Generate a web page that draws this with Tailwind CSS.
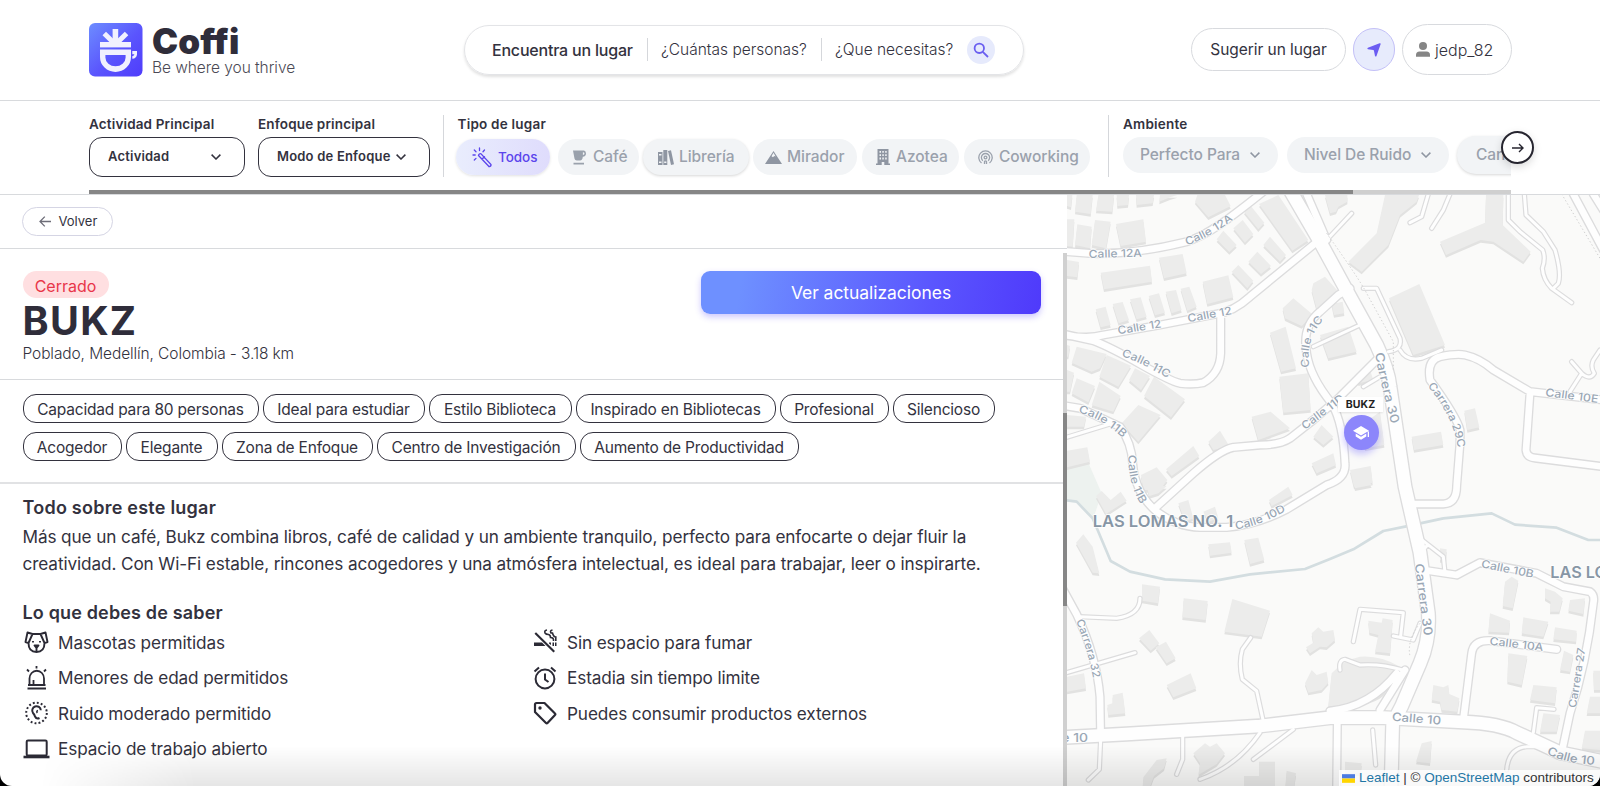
<!DOCTYPE html>
<html lang="es">
<head>
<meta charset="utf-8">
<title>Coffi</title>
<script src="https://cdn.jsdelivr.net/npm/@tailwindcss/browser@4"></script>
</head>
<body class="bg-black">
<div class="relative flex h-[786px] w-[1600px] flex-col overflow-hidden rounded-b-[12px] bg-white font-['Inter','Noto_Sans',sans-serif] text-[#33323e]">

  <!-- Header -->
  <header class="flex h-[101px] shrink-0 items-center border-b border-[#d8dadd] pl-[89px] pr-[88px]">
    <div class="flex w-[375px] items-center gap-[10px]">
      <svg class="-mt-px h-[54px] w-[54px] shrink-0" viewBox="0 0 54 54">
        <defs><linearGradient id="lg" x1="0" y1="0" x2="1" y2="1"><stop offset="0" stop-color="#6d8dff"/><stop offset=".55" stop-color="#5a54fd"/><stop offset="1" stop-color="#4f3cfb"/></linearGradient></defs>
        <rect width="53.5" height="53.5" rx="6" fill="url(#lg)"/>
        <g fill="#f1f1fe">
          <rect x="11" y="19" width="31" height="5.4"/>
          <rect x="23.6" y="6" width="5.6" height="14"/>
          <path d="M13.5 12.2L17 8.8L25.5 17V20H21.4ZM39.3 12.2L35.8 8.8L27.3 17V20H31.4Z"/>
          <path fill-rule="evenodd" d="M11 26.5H42V34A15.5 15 0 0 1 11 34ZM16.4 32V34.5A10.1 8.8 0 0 0 36.6 34.5V32Z"/>
          <path d="M43.3 28H48V31.5Q47.5 35.5 43.3 35.8V33.2Q45.2 33 45.4 31.3H43.3Z"/>
        </g>
      </svg>
      <div class="-ml-px flex flex-col">
        <span class="text-[35px] font-black leading-[34px] text-[#2f2d3a]"><span class="tracking-[0.1px]">Coffi</span></span>
        <span class="text-[15.5px] font-light leading-[19px] tracking-[-0.06px] text-[#4b4a55]">Be where you thrive</span>
      </div>
    </div>
    <div class="-mt-px flex h-[50px] w-[560px] items-center rounded-full border border-[#e3e4e7] pl-[27px] shadow-[0_2px_3px_rgba(0,0,0,0.12)]">
      <span class="w-[155px] pt-px text-base font-medium tracking-[-0.2px]">Encuentra un lugar</span>
      <span class="h-[23px] w-px bg-[#d5d7db]"></span>
      <span class="w-[173px] pl-[13px] pt-px text-[15.5px] font-light">¿Cuántas personas?</span>
      <span class="h-[23px] w-px bg-[#d5d7db]"></span>
      <span class="w-[145px] pl-[13px] pt-px text-[15.5px] font-light">¿Que necesitas?</span>
      <span class="flex h-[28px] w-[28px] items-center justify-center rounded-full bg-[#e6eafc]">
        <svg class="h-[16px] w-[16px]" viewBox="0 0 16 16" fill="none" stroke="#6a5ff0" stroke-width="1.8"><circle cx="6.3" cy="6.3" r="4.7"/><path d="M9.8 9.8L15 15"/></svg>
      </span>
    </div>
    <div class="-mt-px ml-auto flex items-center gap-[7px]">
      <div class="flex h-[43px] w-[155px] items-center justify-center rounded-full border border-[#d8dade] pt-px text-[15.5px] tracking-[-0.05px]">Sugerir un lugar</div>
      <div class="flex h-[43px] w-[42px] items-center justify-center rounded-full border border-[#c3c0f7] bg-[#e7ebfc]">
        <svg class="h-[14px] w-[14px]" viewBox="0 0 14 14" fill="#6b5cf2"><path d="M12.600 .3Q13.900 -.1 13.600 1.300L9.500 12.900Q8.900 14.100 8 13L6.900 7.500Q6.700 7.100 6.300 7L.9 6.200Q-.3 5.500 .9 4.700Z"/></svg>
      </div>
      <div class="flex h-[51px] w-[110px] items-center rounded-full border border-[#d8dade] pl-[13px]">
        <svg class="h-[15px] w-[14px]" viewBox="0 0 14 15" fill="#858585"><circle cx="7" cy="4" r="4"/><path d="M0 14.700V13Q0 9.500 3.500 9.500H10.500Q14 9.500 14 13V14.700Z"/></svg>
        <span class="pl-[5px] text-base font-light">jedp_82</span>
      </div>
    </div>
  </header>

  <!-- Filter bar -->
  <section class="relative flex h-[94px] shrink-0 flex-col border-b border-[#d8dadd] pl-[89px] pr-[89px]">
    <div class="flex h-[89px] overflow-hidden pt-[14px]">
      <div class="w-[169px] shrink-0">
        <div class="h-[22px] text-[13.5px] font-semibold leading-[18px] tracking-[0.15px]">Actividad Principal</div>
        <div class="flex h-[40px] w-[156px] items-center justify-between rounded-[13px] border border-[#33323e] pl-[18px] pr-[23px] text-[13px] font-semibold tracking-[0.2px]"><span>Actividad</span>
          <svg class="h-[6px] w-[10px]" viewBox="0 0 10 6" fill="none" stroke="#33323e" stroke-width="1.500"><path d="M.6 .6L5 5L9.400 .6"/></svg></div>
      </div>
      <div class="w-[185px] shrink-0">
        <div class="h-[22px] text-[13.5px] font-semibold leading-[18px] tracking-[0.15px]">Enfoque principal</div>
        <div class="flex h-[40px] w-[172px] items-center justify-between rounded-[13px] border border-[#33323e] pl-[18px] pr-[23px] text-[13px] font-semibold tracking-[0.2px]"><span>Modo de Enfoque</span>
          <svg class="h-[6px] w-[10px]" viewBox="0 0 10 6" fill="none" stroke="#33323e" stroke-width="1.500"><path d="M.6 .6L5 5L9.400 .6"/></svg></div>
      </div>
      <div class="h-[62px] w-[13px] shrink-0 border-l border-[#d5d7db]"></div>
      <div class="w-[652px] shrink-0">
        <div class="h-[24px] pl-[1.5px] text-[13.5px] font-semibold leading-[18px] tracking-[0.22px]">Tipo de lugar</div>
        <div class="flex text-[15.5px] font-medium tracking-[-0.05px] text-[#9aa1ac]">
          <div class="mr-[8px] flex h-[36px] w-[94px] items-center rounded-full bg-gradient-to-r from-[#e9edfd] to-[#dfdcfc] pl-[16px] text-[13.5px] text-[#5b45ec] shadow-[0_1px_3px_rgba(0,0,0,0.12)]">
            <svg class="mr-[6px] h-[21px] w-[20px]" viewBox="0 0 20 21" fill="none" stroke="#5b45ec" stroke-width="1.300" stroke-linecap="round"><path d="M6.500 8.500Q7 6.300 9 6.800L19 17.500Q19.200 19.500 17.200 19.700ZM10 12L12.500 9.800M7.500 1V3.500M1 8H3.200M2.300 3L4 4.700M12.500 3L11 4.700M2.300 13L4 11.400"/></svg>
            <span>Todos</span></div>
          <div class="mr-[4px] flex h-[36px] w-[81px] items-center rounded-full bg-[#f2f4f6] pl-[15px]">
            <svg class="mr-[7px] h-[15px] w-[13px]" viewBox="0 0 13 15" fill="#9aa1ac"><path fill-rule="evenodd" d="M0 .5H11Q13 .8 13 3.500Q13 6.500 9.800 6.700Q9.500 10.500 7 10.500H4Q1.500 10.500 1.200 7ZM9.900 2.300V5Q11.500 5 11.500 3.600Q11.500 2.300 9.900 2.300ZM.5 12.800H11V14.500H.5Z"/></svg>
            <span>Café</span></div>
          <div class="mr-[4px] flex h-[36px] w-[106px] items-center rounded-full bg-[#f2f4f6] pl-[15px] shadow-[0_1px_3px_rgba(0,0,0,0.16)]">
            <svg class="mr-[5px] h-[15px] w-[16px]" viewBox="0 0 16 15" fill="#8f96a2"><path fill-rule="evenodd" d="M0 2H4.500V15H0ZM1 4V5.500H3.500V4ZM1 11.500V13H3.500V11.500ZM5.300 0H9.300V15H5.300ZM6.200 11.500V13H8.400V11.500ZM10 1L13 .3L16 14.300L13 15Z"/></svg>
            <span>Librería</span></div>
          <div class="mr-[5px] flex h-[36px] w-[104px] items-center rounded-full bg-[#f2f4f6] pl-[12px]">
            <svg class="mr-[5px] h-[13px] w-[17px]" viewBox="0 0 17 13" fill="#8f96a2"><path fill-rule="evenodd" d="M8.500 0L17 13H0ZM8.500 1.800L6.500 5.200L8 6.200L9.200 5L10.600 5.500Z"/></svg>
            <span>Mirador</span></div>
          <div class="mr-[5px] flex h-[36px] w-[97px] items-center rounded-full bg-[#f2f4f6] pl-[14px]">
            <svg class="mr-[6px] h-[16px] w-[14px]" viewBox="0 0 14 16" fill="#8f96a2"><path fill-rule="evenodd" d="M1.500 0H12.500V14.600H14V16H8.300V13H5.700V16H0V14.600H1.500ZM3.500 2V3.800H5V2ZM6.300 2V3.800H7.800V2ZM9.200 2V3.800H10.700V2ZM3.500 5.300V7.100H5V5.300ZM6.300 5.300V7.100H7.800V5.300ZM9.200 5.300V7.100H10.700V5.300ZM3.500 8.600V10.400H5V8.600ZM6.300 8.600V10.400H7.800V8.600ZM9.200 8.600V10.400H10.700V8.600Z"/></svg>
            <span>Azotea</span></div>
          <div class="flex h-[36px] w-[126px] items-center rounded-full bg-[#f2f4f6] pl-[14px]">
            <svg class="mr-[6px] h-[15px] w-[15px]" viewBox="0 0 15 15" fill="none" stroke="#9aa1ac" stroke-width="1.300"><path d="M3.500 13A6.700 6.700 0 1 1 11.500 13M4.800 10.700A4.100 4.100 0 1 1 10.200 10.700"/><circle cx="7.500" cy="7.500" r="1.400"/><path d="M6.500 14V11.500Q7.500 10.300 8.500 11.500V14"/></svg>
            <span>Coworking</span></div>
        </div>
      </div>
      <div class="h-[62px] w-[15px] shrink-0 border-l border-[#d5d7db]"></div>
      <div class="w-[500px] shrink-0">
        <div class="h-[22px] text-[13.5px] font-semibold leading-[18px] tracking-[0.2px]">Ambiente</div>
        <div class="flex text-[15.5px] font-medium tracking-[-0.05px] text-[#9aa1ac]">
          <div class="mr-[9px] flex h-[36px] w-[155px] items-center rounded-full bg-[#f2f4f6] pl-[17px]"><span>Perfecto Para</span>
            <svg class="ml-[10px] h-[6px] w-[10px]" viewBox="0 0 10 6" fill="none" stroke="#8f96a2" stroke-width="1.500"><path d="M.6 .6L5 5L9.400 .6"/></svg></div>
          <div class="mr-[8px] flex h-[36px] w-[162px] items-center rounded-full bg-[#f2f4f6] pl-[17px]"><span>Nivel De Ruido</span>
            <svg class="ml-[10px] h-[6px] w-[10px]" viewBox="0 0 10 6" fill="none" stroke="#8f96a2" stroke-width="1.500"><path d="M.6 .6L5 5L9.400 .6"/></svg></div>
          <div class="-mt-px flex h-[38px] w-[155px] items-center rounded-full bg-[#f2f4f6] pl-[19px] shadow-[0_1px_3px_rgba(0,0,0,0.16)]"><span>Cantidad</span></div>
        </div>
      </div>
    </div>
    <div class="flex h-[4px] bg-[#cfcfcf]"><div class="w-[1264px] bg-[#868686]"></div></div>
    <div class="absolute left-[1501px] top-[30px] flex h-[33px] w-[33px] items-center justify-center rounded-full border-2 border-[#26252f] bg-white shadow-[0_3px_8px_rgba(0,0,0,0.15)]">
      <svg class="h-[10px] w-[12px]" viewBox="0 0 12 10" fill="none" stroke="#26252f" stroke-width="1.400"><path d="M0 5H11M7 1L11 5L7 9"/></svg>
    </div>
  </section>

  <main class="flex min-h-0 flex-1">
    <!-- Place detail -->
    <div class="flex w-[1067px] shrink-0 flex-col">
      <div class="flex h-[54px] shrink-0 items-center border-b border-[#d8dadd] pl-[21.5px]">
        <div class="flex h-[29px] w-[91px] items-center rounded-full border border-[#d5d5e4] pl-[16px] text-[13px]">
          <svg class="mr-[8px] h-[11px] w-[12px]" viewBox="0 0 12 11" fill="none" stroke="#6d6d78" stroke-width="1.300"><path d="M12 5.500H1M5.800 .6L1 5.500L5.800 10.400"/></svg>
          <span>Volver</span></div>
      </div>
      <div class="flex min-h-0 flex-1">
        <div class="flex w-[1063px] flex-col">
          <div class="flex h-[131px] shrink-0 border-b border-[#d8dadd] pl-[22.5px] pr-[22px] pt-[22px]">
            <div class="flex flex-1 flex-col items-start">
              <span class="flex h-[27px] w-[86px] items-center justify-center rounded-full bg-[#ffdfe1] pt-[2px] text-base text-[#e8364a]">Cerrado</span>
              <h1 class="mt-px text-[39.5px] font-bold leading-[44px] tracking-[1.3px] text-[#2f2d3a]">BUKZ</h1>
              <p class="text-[15.5px] font-light leading-[22px] tracking-[-0.1px]">Poblado, Medellín, Colombia - 3.18 km</p>
            </div>
            <div class="flex h-[43px] w-[340px] items-center justify-center rounded-[9px] bg-linear-[100deg,#6e90ff_12%,#5a55fe_68%,#4f3afb] pt-[2px] text-[17.5px] tracking-[-0.05px] text-white shadow-[0_3px_6px_rgba(90,70,250,0.3)]">Ver actualizaciones</div>
          </div>
          <div class="flex h-[104px] shrink-0 flex-col gap-[9px] border-b-2 border-[#e1e2e4] pl-[22.5px] pt-[14px] text-[15.5px] tracking-[-0.2px]">
            <div class="flex gap-[4px]">
              <span class="flex h-[29px] w-[236px] items-center justify-center rounded-[13px] border border-[#33323e] pt-[2px]">Capacidad para 80 personas</span>
              <span class="flex h-[29px] w-[162px] items-center justify-center rounded-[13px] border border-[#33323e] pt-[2px]">Ideal para estudiar</span>
              <span class="flex h-[29px] w-[143px] items-center justify-center rounded-[13px] border border-[#33323e] pt-[2px]">Estilo Biblioteca</span>
              <span class="flex h-[29px] w-[200px] items-center justify-center rounded-[13px] border border-[#33323e] pt-[2px]">Inspirado en Bibliotecas</span>
              <span class="flex h-[29px] w-[109px] items-center justify-center rounded-[13px] border border-[#33323e] pt-[2px]">Profesional</span>
              <span class="flex h-[29px] w-[102px] items-center justify-center rounded-[13px] border border-[#33323e] pt-[2px]">Silencioso</span>
            </div>
            <div class="flex gap-[4px]">
              <span class="flex h-[29px] w-[99px] items-center justify-center rounded-[13px] border border-[#33323e] pt-[2px]">Acogedor</span>
              <span class="flex h-[29px] w-[92px] items-center justify-center rounded-[13px] border border-[#33323e] pt-[2px]">Elegante</span>
              <span class="flex h-[29px] w-[151px] items-center justify-center rounded-[13px] border border-[#33323e] pt-[2px]">Zona de Enfoque</span>
              <span class="flex h-[29px] w-[199px] items-center justify-center rounded-[13px] border border-[#33323e] pt-[2px]">Centro de Investigación</span>
              <span class="flex h-[29px] w-[219px] items-center justify-center rounded-[13px] border border-[#33323e] pt-[2px]">Aumento de Productividad</span>
            </div>
          </div>
          <div class="pl-[22.5px] pt-[12px] text-[17.2px] tracking-[-0.115px]">
            <h2 class="text-[18px] font-semibold leading-[24px] tracking-[0.24px]">Todo sobre este lugar</h2>
            <p class="mt-[2.5px] whitespace-nowrap leading-[27px]">Más que un café, Bukz combina libros, café de calidad y un ambiente tranquilo, perfecto para enfocarte o dejar fluir la<br>creatividad. Con Wi-Fi estable, rincones acogedores y una atmósfera intelectual, es ideal para trabajar, leer o inspirarte.</p>
            <h2 class="mt-[24.5px] text-[18px] font-semibold leading-[24px] tracking-[0.16px]">Lo que debes de saber</h2>
            <div class="-mt-[0.5px] grid grid-cols-[509.5px_1fr] leading-[35.5px]">
              <div class="flex items-center gap-[8.5px]"><svg class="h-[26px] w-[27px]" viewBox="0 0 26 26" fill="none" stroke="#2b2a35" stroke-width="1.900" stroke-linejoin="round"><path d="M9 5H17L22 3.500L24 13L21 14Q21 23 13 23Q5 23 5 14L2 13L4 3.500ZM9 5L5 14M17 5L21 14"/><path d="M11 16.500H15L13 19ZM13 19V22" fill="#2b2a35"/><path d="M9.500 12V13.500M16.500 12V13.500"/></svg><span>Mascotas permitidas</span></div>
              <div class="flex items-center gap-[9px]"><svg class="h-[26px] w-[26px]" viewBox="0 0 26 26" fill="#2b2a35"><path d="M2.500 4.800L4 3.300L23 22L21.500 23.500ZM2 13.500H10L13.500 17H2ZM17 13.500H19V16L17 14.500ZM20.500 13.500H22V17H20.500ZM23 13.500H24.500V17H23Z"/><path d="M15 1Q12 1.500 13 4Q14 5.500 16.500 5.500Q18.500 6 18.500 8.500Q22 8.500 21.500 12M20.500 1Q17.500 1.500 19 4H20.500Q21.500 8 23.800 8V12" fill="none" stroke="#2b2a35" stroke-width="1.600"/></svg><span>Sin espacio para fumar</span></div>
              <div class="flex items-center gap-[8.5px]"><svg class="h-[26px] w-[27px]" viewBox="0 0 26 26" fill="none" stroke="#2b2a35" stroke-width="1.800"><path d="M4 23.500H22.500M6 20V13.500A7 7.500 0 0 1 20.500 13.500V20M4.500 20H22M10 20V15M13 1V3.500M3.500 4.500L5.500 6.500M22.500 4.500L20.500 6.500"/></svg><span>Menores de edad permitidos</span></div>
              <div class="flex items-center gap-[9px]"><svg class="h-[26px] w-[26px]" viewBox="0 0 26 26" fill="none" stroke="#2b2a35" stroke-width="2"><circle cx="13" cy="14" r="9.400"/><path d="M13 8.500V14.500L16.500 17M2.500 6.500L7 2.500M23.500 6.500L19 2.500"/></svg><span>Estadia sin tiempo limite</span></div>
              <div class="flex items-center gap-[8.5px]"><svg class="h-[26px] w-[27px]" viewBox="0 0 26 26" fill="none" stroke="#2b2a35" stroke-width="2"><circle cx="13" cy="13" r="10.300" stroke-dasharray="1.900 2.145"/><path d="M17.300 10.300A4.300 4.300 0 1 0 9.500 13Q11 14.500 11.500 16.500Q13 19.500 16 18" /><path d="M14.500 10.500Q12.500 11 13.800 13" stroke-width="1.500"/></svg><span>Ruido moderado permitido</span></div>
              <div class="flex items-center gap-[9px]"><svg class="h-[26px] w-[26px]" viewBox="0 0 26 26" fill="none" stroke="#2b2a35" stroke-width="2.200" stroke-linejoin="round"><path d="M3 4.500Q3 3 4.500 3H12.500L23 13.500Q23.800 14.200 23 15L15.500 23Q14.800 23.800 14 23L3 12Z"/><circle cx="8" cy="8" r="1.700" fill="#2b2a35" stroke="none"/></svg><span>Puedes consumir productos externos</span></div>
              <div class="flex items-center gap-[8.5px]"><svg class="h-[26px] w-[27px]" viewBox="0 0 26 26" fill="none" stroke="#2b2a35" stroke-width="2"><rect x="3.200" y="4.500" width="20" height="15" rx="1.300"/><path d="M0 21H26" stroke-width="2.600"/></svg><span>Espacio de trabajo abierto</span></div>
            </div>
          </div>
        </div>
        <div class="mt-[4px] flex w-[4px] flex-col bg-[#d0d0d0]"><div class="mt-[160px] h-[193px] bg-[#868686]"></div></div>
      </div>
    </div>

    <!-- Map: one unit is a third of a pixel -->
    <div class="relative w-[533px] overflow-hidden bg-[#fafaf9]">
      <svg class="block h-[591px] w-[533px]" viewBox="21 15 1599 1773">
        <path fill="#edf2ef" d="M21 830L85 818L125 910L100 985L50 935L21 930Z"/>
        <path fill="none" stroke="#d3dde0" stroke-width="8" stroke-linejoin="round" d="M0 928L50 935L98 985L152 1113L210 1145L315 1168L450 1175L570 1153L735 1137L810 1107L880 1078L970 1023L1035 1010L1150 985L1295 970L1365 1004L1490 1013L1585 1050H1620"/>
        <defs>
          <g id="b">
            <path d="M21 15H37L33 52L21 48ZM50 15H98L92 72L45 65ZM115 15H162L157 65L108 62ZM170 15H207L204 45L172 48ZM228 15H282L278 40L230 45ZM300 15H352L330 22L298 35ZM21 88H43L38 170L21 168ZM52 103L95 110L90 175L45 165ZM105 90L152 95L138 175L95 165ZM168 102L250 88L258 155L182 168ZM412 15H495L512 48L445 82L405 35ZM470 148L490 122L530 165L508 186ZM520 115L548 90L580 132L555 158ZM552 65L570 45L613 98L595 118ZM597 42L655 15L745 150L697 182ZM610 165L630 140L678 195L660 215ZM565 215L592 185L633 228L603 252ZM515 245L535 225L580 272L562 295ZM428 275L505 256L520 322L442 342ZM297 203L368 192L380 250L312 265ZM122 248L270 227L276 275L132 298ZM21 210L57 216L52 262L21 258ZM107 358L137 350L152 405L122 412ZM158 342L188 336L207 390L176 400ZM210 328L242 322L260 380L230 388ZM266 318L297 310L315 368L285 376ZM317 305L348 300L365 360L335 370ZM362 296L388 290L410 350L382 362Z"/>
            <path d="M50 470L140 492L120 535L95 545L35 518ZM140 495L213 527L175 590L118 560ZM225 535L270 558L243 600L207 570ZM21 465L30 468L25 500H21ZM50 565L105 588L85 637L35 610ZM118 575L182 618L160 665L95 645ZM21 540L42 548L30 605H21ZM282 560L375 628L333 682L252 618ZM235 645L302 675L235 755L185 700ZM21 675L78 680L72 710H21ZM21 782L82 772L90 815L21 832ZM630 428L677 410L708 535L663 545ZM658 560L745 550L752 660L670 668ZM668 355L700 325L760 375L725 408L675 385ZM755 300L760 280L795 260L840 310L770 358ZM575 680L632 665L690 715L595 750ZM445 755L480 722L508 768L460 780ZM318 838L400 768L418 798L335 858ZM243 855L290 832L322 870L300 900H250ZM760 740L785 705L820 740L790 765ZM755 820L820 790L828 825L770 850Z"/>
            <path d="M795 15H862V35L835 50L828 65L810 70ZM975 15H1077L1070 35L1020 75L985 165L905 245L865 215L950 130ZM1278 15H1330L1328 105L1412 185L1390 215L1300 155L1262 150L1158 195L1140 155L1275 98ZM987 325L1078 282L1155 465L1060 495ZM780 435L865 410L890 485L805 505ZM815 342L848 335L853 370L822 375ZM1213 662L1245 655L1258 712L1222 720ZM1055 740L1143 725L1150 765L1062 780ZM890 550L930 540L940 570L895 580ZM912 700L960 665L973 765L915 775ZM870 840L932 828L938 878L882 890Z"/>
            <path d="M108 918L125 903L152 930L182 905L200 932L138 972ZM260 888H320L295 910L268 918ZM355 940L385 930L400 985L375 995ZM430 965L465 950L475 985L445 995ZM627 930L685 890L698 915L635 948ZM48 1058L70 1033L98 1070L118 1150L98 1148ZM445 1063L510 1057L515 1088L450 1097ZM553 1050L595 1043L613 1110L570 1122ZM246 1183L300 1190L294 1240L246 1232ZM371 1225L443 1233L437 1290L367 1282ZM517 1227L630 1262L605 1340L493 1325ZM237 1345L268 1320L298 1360L272 1382ZM287 1372L318 1355L347 1405L320 1420ZM320 1485L392 1450L409 1495L340 1522ZM21 1460L72 1450L78 1495L21 1505ZM142 1545L158 1540V1515L188 1508L196 1570L145 1575ZM738 1372L760 1358L755 1330L775 1312L790 1325L820 1320L825 1350L800 1372L780 1370L750 1390ZM735 1480L755 1440L770 1455L800 1445L805 1478L785 1500L745 1508ZM400 1690L435 1660L450 1670L470 1660L495 1690L470 1722L415 1755L420 1720ZM250 1762L290 1710L320 1705L312 1735L282 1758L270 1790H248ZM552 1758H597V1715H645V1790H552ZM680 1742L708 1750L702 1790H676Z"/>
            <path d="M880 870H925L935 885L885 895ZM1335 1175L1355 1160L1375 1172L1358 1255L1328 1248ZM1455 1195L1485 1205L1508 1225L1498 1265H1470L1472 1235L1455 1225ZM1530 1230L1575 1225L1570 1272L1525 1262ZM1290 1270L1350 1292L1347 1328L1285 1325ZM1390 1282L1465 1295L1450 1340L1385 1330ZM1485 1312L1550 1322L1548 1355L1480 1348ZM1345 1390L1402 1398L1385 1485L1342 1475ZM1512 1382L1540 1395L1530 1445L1500 1440ZM1420 1485L1490 1492L1485 1540L1410 1530ZM1450 1570L1500 1575L1490 1625L1440 1625ZM1600 1442H1620V1500H1602ZM1590 1520H1620V1570H1580ZM1575 1622H1620V1680L1565 1675ZM925 1292L965 1298L968 1285L998 1290L990 1390L945 1385L955 1335L928 1328ZM805 1545L815 1450Q850 1410 900 1400Q960 1395 1020 1430L970 1510Q930 1545 805 1550ZM1120 1485L1150 1492L1165 1485L1168 1512L1198 1525L1192 1565L1145 1560L1140 1535L1115 1530ZM1085 1660L1115 1653L1110 1720L1068 1715ZM855 1715L905 1720L902 1750H855ZM1140 1075L1160 1078L1158 1110H1140Z"/>
          </g>
          <g id="r10" fill="none" stroke-linejoin="round" stroke-linecap="round">
            <path d="M910 295L950 295L1020 445Q1028 480 985 485M1020 480Q1040 515 1085 505L1145 480M1105 12L1085 80L1050 98M1170 12L1150 60L1115 115M1345 12V90L1380 125L1448 180Q1458 205 1447 235Q1450 270 1475 295L1535 338M1393 12L1398 75L1450 125L1485 180Q1505 250 1495 280L1480 295M1535 515L1565 550L1530 605M1565 550Q1590 572 1603 550Q1590 530 1600 510L1620 480M875 70L800 150M760 470L900 405M0 748L150 702M20 1448L225 1388M60 1280L170 1285Q240 1275 240 1225M612 1603L590 1503L547 1468Q535 1420 547 1378L572 1343M368 1638V1708L350 1753M600 1628Q530 1730 420 1768M700 1618L580 1708M122 1648L118 1738L85 1770M840 1440Q835 1410 855 1408L900 1425Q960 1420 1028 1440M880 1355L900 1258L1030 1268L1022 1338M1000 1338L1060 1350L1080 1300M1080 1045L1150 1100L1155 1148M1085 1085L1100 1068M1420 1628L1430 1553L1482 1558M1340 1740Q1345 1675 1400 1670H1440M938 1620L947 1725M910 590L960 560L985 570"/>
          </g>
          <g id="r20" fill="none" stroke-linejoin="round" stroke-linecap="round">
            <path d="M0 183L100 191C200 192 300 175 380 155C450 135 540 60 610 5M0 432Q80 450 130 435L300 405L470 372Q520 365 570 320L780 148M0 430L100 452C200 490 300 565 360 580Q400 585 430 578Q480 550 482 490V370M870 295L835 315L780 365Q725 410 740 490Q750 560 815 640M290 950L400 850Q480 780 520 772L600 765Q660 765 690 745L760 690L830 630L960 500M0 645L60 655L180 710Q215 760 218 820Q225 910 290 965Q350 1010 420 1012L500 1012Q590 1005 680 958L800 885Q860 865 855 820Q850 700 815 640M1190 888L1200 760V720Q1190 680 1110 570Q1100 510 1140 500Q1190 490 1215 495Q1260 505 1300 540L1410 605L1630 630M1190 888Q1190 940 1150 942H1065M1410 610L1398 780Q1400 802 1425 804L1630 830M10 1200L50 1273Q110 1400 120 1520L122 1640M1090 1140L1190 1155L1260 1118L1430 1150L1510 1190L1590 1205Q1605 1215 1600 1240Q1580 1420 1530 1570L1505 1688M1490 1378L1290 1352Q1240 1350 1235 1390L1210 1590M832 1600L830 1790M1035 1440L960 1560M810 1563Q930 1550 1010 1450M1540 12L1630 180M1600 12L1630 60M740 12L800 150"/>
          </g>
          <g id="r40" fill="none" stroke-linejoin="round">
            <path d="M690 0L780 155L870 320L950 465Q985 540 990 590L1035 890L1080 1088L1105 1270Q1110 1350 1080 1420L1025 1548L998 1600L993 1800M0 1643L200 1632L600 1608L810 1583H970L1210 1596Q1320 1600 1370 1628L1500 1688L1630 1715"/>
          </g>
        </defs>
        <use href="#b" fill="#e2e2e1" y="8"/><use href="#b" fill="#ececeb"/>
        <g stroke="#dcdcdd"><use href="#r10" stroke-width="16"/><use href="#r20" stroke-width="28"/><use href="#r40" stroke-width="46"/></g>
        <g stroke="#fefefe"><use href="#r10" stroke-width="9"/><use href="#r20" stroke-width="20"/><use href="#r40" stroke-width="38"/></g>
        <path fill="none" stroke="#cfcfcf" stroke-width="3" stroke-dasharray="4 7" d="M800 130Q900 270 920 310L1000 455V540M1505 12L1620 205M1080 1300Q1040 1350 1050 1400"/>
        <defs>
          <path id="t1" d="M86 204L250 200"/><path id="t2" d="M380 166Q450 145 560 60"/><path id="t3" d="M175 433L330 408"/><path id="t4" d="M385 397L540 368"/>
          <path id="t5" d="M184 498Q240 515 340 575"/><path id="t6" d="M55 668Q130 685 200 755"/><path id="t7" d="M205 795Q205 900 255 960"/>
          <path id="t8" d="M748 532Q735 440 800 380"/><path id="t9" d="M735 720L860 625"/><path id="t10" d="M945 490Q960 580 1010 760"/>
          <path id="t11" d="M1102 588Q1190 690 1196 800"/><path id="t12" d="M1455 618L1640 642"/><path id="t13" d="M527 1018Q600 1010 700 950"/>
          <path id="t14" d="M48 1292Q90 1400 102 1480"/><path id="t15" d="M1064 1122L1095 1360"/><path id="t16" d="M1262 1132L1440 1168"/>
          <path id="t17" d="M1288 1364L1470 1386"/><path id="t18" d="M1548 1555L1580 1350"/><path id="t19" d="M995 1592L1170 1606"/><path id="t20" d="M1460 1692Q1530 1725 1630 1725"/>
        </defs>
        <g fill="#9aa7b5" stroke="#fff" stroke-width="4" paint-order="stroke" font-family="Inter, sans-serif" font-size="33" font-weight="500">
          <text><textPath href="#t1" textLength="160" lengthAdjust="spacingAndGlyphs">Calle 12A</textPath></text>
          <text><textPath href="#t2" textLength="160" lengthAdjust="spacingAndGlyphs">Calle 12A</textPath></text>
          <text><textPath href="#t3" textLength="132" lengthAdjust="spacingAndGlyphs">Calle 12</textPath></text>
          <text><textPath href="#t4" textLength="134" lengthAdjust="spacingAndGlyphs">Calle 12</textPath></text>
          <text><textPath href="#t5" textLength="155" lengthAdjust="spacingAndGlyphs">Calle 11C</textPath></text>
          <text><textPath href="#t6" textLength="155" lengthAdjust="spacingAndGlyphs">Calle 11B</textPath></text>
          <text><textPath href="#t7" textLength="155" lengthAdjust="spacingAndGlyphs">Calle 11B</textPath></text>
          <text><textPath href="#t8" textLength="155" lengthAdjust="spacingAndGlyphs">Calle 11C</textPath></text>
          <text><textPath href="#t9" textLength="150" lengthAdjust="spacingAndGlyphs">Calle 11D</textPath></text>
          <text font-size="37"><textPath href="#t10" textLength="218" lengthAdjust="spacingAndGlyphs">Carrera 30</textPath></text>
          <text><textPath href="#t11" textLength="210" lengthAdjust="spacingAndGlyphs">Carrera 29C</textPath></text>
          <text><textPath href="#t12" textLength="160" lengthAdjust="spacingAndGlyphs">Calle 10E</textPath></text>
          <text><textPath href="#t13" textLength="162" lengthAdjust="spacingAndGlyphs">Calle 10D</textPath></text>
          <text><textPath href="#t14" textLength="180" lengthAdjust="spacingAndGlyphs">Carrera 32</textPath></text>
          <text font-size="37"><textPath href="#t15" textLength="218" lengthAdjust="spacingAndGlyphs">Carrera 30</textPath></text>
          <text><textPath href="#t16" textLength="160" lengthAdjust="spacingAndGlyphs">Calle 10B</textPath></text>
          <text><textPath href="#t17" textLength="162" lengthAdjust="spacingAndGlyphs">Calle 10A</textPath></text>
          <text><textPath href="#t18" textLength="182" lengthAdjust="spacingAndGlyphs">Carrera 27</textPath></text>
          <text font-size="35"><textPath href="#t19" textLength="148" lengthAdjust="spacingAndGlyphs">Calle 10</textPath></text>
          <text font-size="35"><textPath href="#t20" textLength="148" lengthAdjust="spacingAndGlyphs">Calle 10</textPath></text>
          <text font-size="35" x="4" y="1655" textLength="80" lengthAdjust="spacingAndGlyphs">e 10</text>
          <g font-size="47" font-weight="600" fill="#8796a5"><text x="98" y="1011" textLength="422" lengthAdjust="spacingAndGlyphs">LAS LOMAS NO. 1</text><text x="1471" y="1165" textLength="282" lengthAdjust="spacingAndGlyphs">LAS LOMAS</text></g>
        </g>
      </svg>
      <div class="absolute left-[271px] top-[202px] flex h-[15px] w-[45px] items-center justify-center bg-white text-[10.5px] font-bold tracking-[0.1px] text-[#222] shadow-[0_1px_2px_rgba(0,0,0,0.1)]">BUKZ</div>
      <div class="absolute left-[276.5px] top-[220px] flex h-[35px] w-[35px] items-center justify-center rounded-full bg-[#8c86fb] shadow-[0_4px_7px_rgba(120,110,255,0.4)]">
        <svg class="h-[14px] w-[16px]" viewBox="0 0 16 14"><path fill="#fff" d="M8 0L16 4.800L8 9.600L0 4.800ZM2.700 7.500L8 10.700L13.300 7.500V10.500L8 13.700L2.700 10.500ZM14.700 5.500H16V11H14.700Z"/></svg>
      </div>
      <div class="absolute bottom-0 right-0 z-20 flex h-[16px] w-[261px] items-center bg-white/80 pl-[3px] pt-px font-['Liberation_Sans',sans-serif] text-[13.5px] text-[#333]">
        <svg class="mr-[4px] h-[9px] w-[13px] shrink-0" viewBox="0 0 12 8"><path fill="#4C7BE1" d="M0 0h12v4H0z"/><path fill="#FFD500" d="M0 4h12v4H0z"/></svg>
        <span class="whitespace-pre"><span class="text-[#1f76a5]">Leaflet</span> | © <span class="text-[#1f76a5]">OpenStreetMap</span> contributors</span>
      </div>
    </div>
  </main>

  <!-- Soft fade along the bottom edge -->
  <div class="pointer-events-none absolute bottom-0 left-[40px] right-0 h-[40px] bg-linear-to-t from-black/10 to-transparent mask-l-from-90%"></div>
</div>
</body>
</html>
